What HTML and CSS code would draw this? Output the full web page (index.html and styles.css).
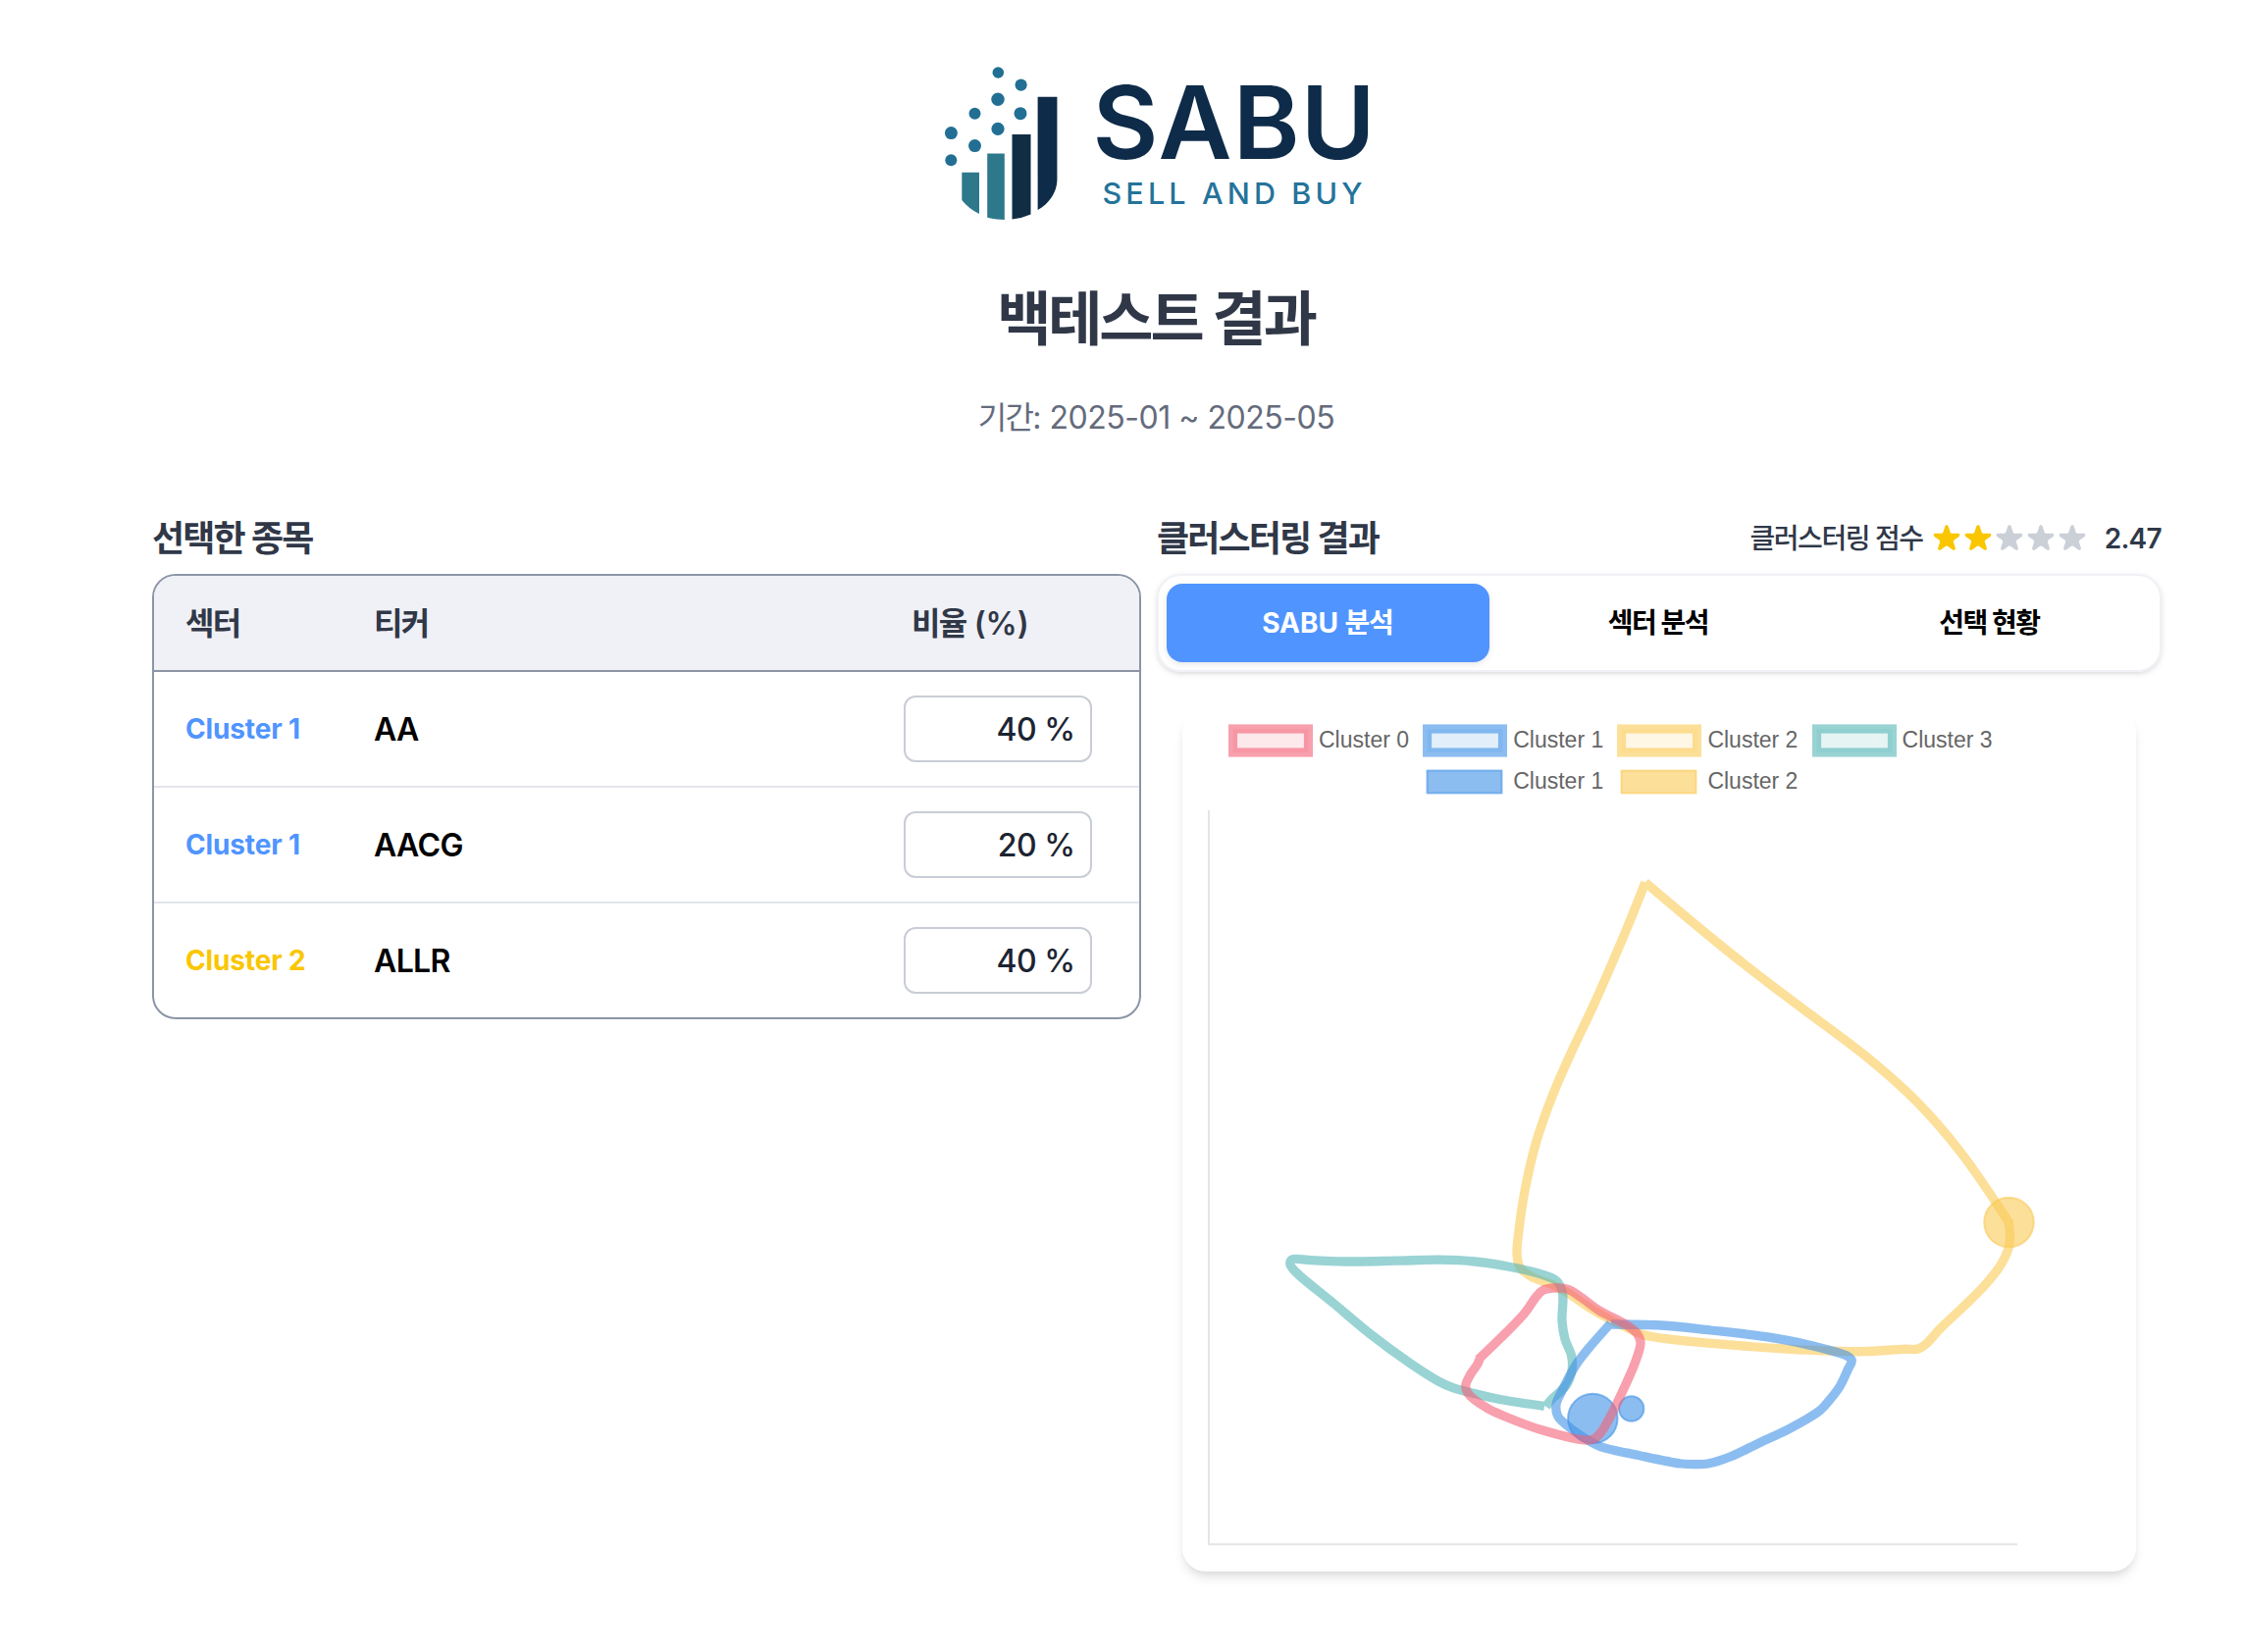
FILE: index.html
```html
<!DOCTYPE html>
<html lang="ko">
<head>
<meta charset="utf-8">
<title>SABU - 백테스트 결과</title>
<link rel="stylesheet" href="styles.css">
</head>
<body>
<main class="page">
  <header class="hero">
    <svg class="logo" viewBox="954 56 450 180" role="img" aria-label="SABU">
      <g fill="#226f93">
        <circle cx="1017.3" cy="74" r="5.8"/>
        <circle cx="1040.6" cy="86.6" r="6.1"/>
        <circle cx="1017" cy="101.3" r="6.7"/>
        <circle cx="993.5" cy="115.7" r="6"/>
        <circle cx="1040" cy="115.7" r="6.5"/>
        <circle cx="1017" cy="131.4" r="6.6"/>
        <circle cx="969.4" cy="135.6" r="6.5"/>
        <circle cx="993.5" cy="148.6" r="6.5"/>
        <circle cx="969.3" cy="163.2" r="6"/>
      </g>
      <path fill="#2d788b" d="M980.3 175.8H998V218Q987.500 213 980.300 204Z"/>
      <path fill="#2d788b" d="M1006.200 156.400H1023.800V223.900Q1015 223.800 1006.200 221.800Z"/>
      <path fill="#112d45" d="M1031.500 137H1050.500V218.500Q1041.500 222.600 1031.500 223.500Z"/>
      <path fill="#0e2b49" d="M1057.600 98.800H1077.400V184C1077 196 1069 208 1057.600 214Z"/>
      <text class="logo-name" x="1113.500" y="161.800" textLength="288" lengthAdjust="spacing">SABU</text>
      <text class="logo-tag" x="1123.500" y="207.700" textLength="265" lengthAdjust="spacing">SELL AND BUY</text>
    </svg>
    <h1 class="title ko">백테스트 결과</h1>
    <p class="period"><span class="ko">기간</span>: 2025-01 ~ 2025-05</p>
  </header>

  <div class="columns">
    <section class="stocks">
      <div class="section-head"><h2 class="ko">선택한 종목</h2></div>
      <div class="table">
        <div class="row head">
          <span class="ko">섹터</span><span class="ko">티커</span><span class="ratio-head"><span class="ko">비율</span> (%)</span>
        </div>
        <div class="row">
          <span class="sector blue">Cluster 1</span><span class="ticker">AA</span><span class="ratio">40 %</span>
        </div>
        <div class="row">
          <span class="sector blue">Cluster 1</span><span class="ticker">AACG</span><span class="ratio">20 %</span>
        </div>
        <div class="row">
          <span class="sector yellow">Cluster 2</span><span class="ticker">ALLR</span><span class="ratio">40 %</span>
        </div>
      </div>
    </section>

    <section class="clusters">
      <div class="section-head">
        <h2 class="ko">클러스터링 결과</h2>
        <div class="score">
          <span class="score-label ko">클러스터링 점수</span>
          <svg class="stars" viewBox="0 0 100 20">
            <defs><path id="star" transform="translate(10 10) scale(1.120) translate(-10 -9.900)" d="M9.049 2.927c.3-.921 1.603-.921 1.902 0l1.070 3.292a1 1 0 00.950.690h3.462c.969 0 1.371 1.240.588 1.810l-2.800 2.034a1 1 0 00-.364 1.118l1.070 3.292c.3.921-.755 1.688-1.540 1.118l-2.800-2.034a1 1 0 00-1.175 0l-2.800 2.034c-.784.570-1.838-.197-1.539-1.118l1.070-3.292a1 1 0 00-.364-1.118L2.980 8.720c-.783-.570-.380-1.810.588-1.810h3.461a1 1 0 00.951-.690l1.070-3.292z"/></defs>
            <use href="#star" class="on"/><use href="#star" class="on" x="20"/><use href="#star" class="off" x="40"/><use href="#star" class="off" x="60"/><use href="#star" class="off" x="80"/>
          </svg>
          <span class="score-value">2.47</span>
        </div>
      </div>
      <nav class="tabs">
        <button class="tab active">SABU <span class="ko">분석</span></button>
        <button class="tab"><span class="ko">섹터 분석</span></button>
        <button class="tab"><span class="ko">선택 현황</span></button>
      </nav>
      <div class="card">
        <div class="legend">
          <span class="key"><svg class="swatch c0" viewBox="0 0 86 34"><rect x="4.500" y="5" width="77" height="24"/></svg>Cluster 0</span>
          <span class="key"><svg class="swatch c1" viewBox="0 0 86 34"><rect x="4.500" y="5" width="77" height="24"/></svg>Cluster 1</span>
          <span class="key"><svg class="swatch c2" viewBox="0 0 86 34"><rect x="4.500" y="5" width="77" height="24"/></svg>Cluster 2</span>
          <span class="key"><svg class="swatch c3" viewBox="0 0 86 34"><rect x="4.500" y="5" width="77" height="24"/></svg>Cluster 3</span>
          <span class="key second"><svg class="swatch p1" viewBox="0 0 86 34"><rect x="4.500" y="5.500" width="76" height="23"/></svg>Cluster 1</span>
          <span class="key"><svg class="swatch p2" viewBox="0 0 86 34"><rect x="4.500" y="5.500" width="76" height="23"/></svg>Cluster 2</span>
        </div>
        <svg class="plot" id="plot" viewBox="1205 822 972 780">
          <path class="axis" d="M1232 826V1575M1231 1574.200H2056"/>
          <circle class="p2" cx="2047.500" cy="1246" r="25.300"/>
          <circle class="p1" cx="1623.300" cy="1446" r="25.300"/>
          <circle class="p1" cx="1662.700" cy="1436" r="12.700"/>
        </svg>
      </div>
    </section>
  </div>
</main>
<script src="chart.js"></script>
</body>
</html>
```
FILE: styles.css
```css
* { box-sizing: border-box; }
body {
  margin: 0;
  background: #fff;
  color: #303848;
  font-family: Inter, "Noto Sans CJK KR", sans-serif;
}
h1, h2, p { margin: 0; }
.ko { letter-spacing: -0.052em; }

.page { padding: 56px 83px 82px 155px; }

.hero { display: flex; flex-direction: column; align-items: center; }
.logo { display: block; width: 450px; height: 180px; }
.logo-name { font-size: 103px; font-weight: 600; fill: #0e2b49; }
.logo-tag { font-size: 30.500px; font-weight: 500; fill: #24739a; }
.title { margin-top: 53px; padding-right: 2px; font-size: 60px; line-height: 72px; font-weight: 700; }
.period { margin-top: 41px; padding-right: 1px; font-size: 32px; line-height: 48px; letter-spacing: -0.480px; color: #646b7c; }

.columns { display: grid; grid-template-columns: 1008px 1024px; gap: 16px; margin-top: 75px; align-items: start; }
.section-head { display: flex; justify-content: space-between; align-items: center; height: 48px; margin-bottom: 12px; }
.section-head h2 { font-size: 36px; line-height: 48px; font-weight: 600; }

.table { border: 2px solid #8c95a7; border-radius: 24px; overflow: hidden; }
.row {
  display: grid;
  grid-template-columns: 192px 1fr 192px;
  align-items: center;
  height: 118px;
  padding: 0 48px 0 32px;
  border-bottom: 2px solid #e3e5ec;
  font-size: 32px;
}
.row:last-child { height: 116px; border-bottom: 0; }
.row.head { height: 98px; padding-bottom: 4px; background: #f0f1f6; border-color: #8c95a7; font-weight: 600; }
.ratio-head { padding-left: 8px; }
.sector { font-size: 28px; font-weight: 700; letter-spacing: -0.150px; }
.blue { color: #5094ff; }
.yellow { color: #f9c600; }
.ticker { color: #000; font-weight: 600; letter-spacing: -0.650px; }
.ratio {
  height: 68px;
  padding-right: 15.500px;
  border: 2px solid #c9cdd5;
  border-radius: 12px;
  line-height: 66px;
  text-align: right;
  font-weight: 500;
  letter-spacing: -0.500px;
  color: #1c2432;
}

.score { display: flex; align-items: center; font-size: 28px; line-height: 40px; }
.score-label { font-weight: 500; margin-right: 8px; }
.stars { width: 160px; height: 32px; margin-right: 17px; }
.on { fill: #f9c600; }
.off { fill: #cbcfd7; }
.score-value { font-weight: 600; letter-spacing: -0.700px; }

.tabs {
  display: grid;
  grid-template-columns: repeat(3, 1fr);
  gap: 8px;
  height: 100px;
  padding: 8px;
  border: 2px solid #f0f1f6;
  border-radius: 24px;
  box-shadow: 0 2px 6px rgba(0, 0, 0, .1), 0 2px 4px -2px rgba(0, 0, 0, .1);
}
.tab {
  border: 0;
  border-radius: 16px;
  background: none;
  padding: 0 2px 0 0;
  font: 700 28px/40px Inter, "Noto Sans CJK KR", sans-serif;
  color: #000;
}
.tab.active { background: #5094ff; color: #fff; box-shadow: 0 2px 6px rgba(0, 0, 0, .1); }

.card {
  margin: 38px 26px 0;
  border-radius: 24px;
  background: #fff;
  box-shadow: 0 8px 12px -2px rgba(0, 0, 0, .1), 0 4px 8px -4px rgba(0, 0, 0, .1);
}
.legend {
  display: grid;
  grid-template-columns: repeat(4, 198.200px);
  grid-auto-rows: 42px;
  height: 99px;
  padding: 10.500px 0 0 47px;
  font-family: "Liberation Sans", Arial, sans-serif;
  font-size: 23px;
  color: #666;
}
.key { display: flex; align-items: center; gap: 6px; }
.key.second { grid-column: 2; }
.swatch { width: 86px; height: 34px; }
.swatch rect { stroke-width: 9.200; }

.c0 { stroke: rgba(243, 97, 118, .6); fill: rgba(243, 97, 118, .14); }
.c1 { stroke: rgba(63, 145, 230, .6); fill: rgba(63, 145, 230, .15); }
.c2 { stroke: rgba(250, 202, 85, .6); fill: rgba(250, 202, 85, .15); }
.c3 { stroke: rgba(85, 182, 183, .6); fill: rgba(85, 182, 183, .15); }
.p1, .swatch.p1 rect { stroke: rgba(63, 145, 230, .6); fill: rgba(63, 145, 230, .6); stroke-width: 1.900; }
.p2, .swatch.p2 rect { stroke: rgba(250, 202, 85, .6); fill: rgba(250, 202, 85, .6); stroke-width: 1.900; }

.plot { display: block; width: 972px; height: 780px; }
.plot .line { fill: none; stroke-width: 9.300; }
.axis { fill: none; stroke: #e5e5e5; stroke-width: 2; }
```
FILE: chart.js
```js
// Cluster outlines, back to front.
const outlines = [
  { cls: 'c2', points: [
    [1676.8,899.5],[1719.9,935.9],[1762.1,970.5],[1803.7,1003],[1845,1034],[1904.9,1079.4],[1954.3,1123.8],[1999.7,1176.5],[2047.3,1246],[2047.3,1246],
    [2048,1268],[2040,1288],[2023,1310],[2000,1333],[1976.7,1355],[1963,1370],[1955,1375],[1940,1375.3],[1900,1377.7],[1853,1376.7],
    [1776.7,1372],[1675,1360.7],[1655,1351.7],[1640,1344.5],[1620,1333],[1598,1318],[1583,1310],[1560,1301],[1549,1291.7],[1546,1278],
    [1547.7,1256.7],[1554,1214],[1565.8,1163.6],[1583,1115],[1602,1071.5],[1624,1025],[1644,979.5],[1661.5,938],[1676.8,899.5]] },
  { cls: 'c3', points: [
    [1574,1433.3],[1530,1426.7],[1506.7,1421.5],[1480,1414.3],[1466.7,1408.3],[1436.7,1389.3],[1396.7,1360],[1360,1329.3],[1320,1296],
    [1314.8,1288.5],[1316.7,1283.9],[1336.7,1284.7],[1380,1286],[1423.3,1285.2],[1466.7,1284.2],[1503.3,1286],[1536.7,1291],[1570,1298.7],
    [1586.7,1306],[1592.5,1318],[1592,1346.7],[1595,1365],[1601.5,1381.7],[1602.3,1395],[1597,1411],[1580,1428],[1575.7,1434]] },
  { cls: 'c1', points: [
    [1641.7,1350],[1693.3,1351],[1743.3,1356],[1800,1362.7],[1843.3,1371],[1883.3,1382.7],[1887.3,1386.7],[1883.3,1396],[1875,1413.3],
    [1865,1426.7],[1855,1437.7],[1823.3,1456.7],[1793.3,1470.7],[1763.3,1485],[1741.7,1491.7],[1726.7,1492.7],[1713.3,1492],[1670,1483.5],
    [1631.7,1474.8],[1621.7,1470],[1596.7,1452.7],[1587.7,1443.5],[1586,1431.7],[1591.7,1418.3],[1606.7,1390.5],[1619,1374.5],[1641.500,1349]] },
  { cls: 'c0', points: [
    [1506.5,1386],[1553.3,1339.3],[1565,1322.7],[1571.7,1315.7],[1583.3,1313],[1598.3,1314.3],[1611.7,1322.7],[1630,1336],[1656.7,1350],
    [1668.3,1359.3],[1672,1368.3],[1666.7,1388.3],[1656.7,1411.7],[1641.7,1443],[1631.7,1460],[1625,1466.7],[1616.7,1468.2],[1573.3,1458.3],
    [1543.3,1447.7],[1516.7,1436],[1496.7,1421],[1493.7,1412.7],[1498.3,1401.7],[1505.7,1390.7],[1508,1385.5]] }
];

// Smooth curve through the points; a repeated point makes a corner.
function curve(p) {
  let d = `M${p[0]}`;
  for (let i = 0; i < p.length - 1; i++) {
    const a = p[i - 1] || p[i], b = p[i], c = p[i + 1], e = p[i + 2] || c;
    if (b[0] === c[0] && b[1] === c[1]) continue;
    const len = (u, v) => Math.sqrt(Math.hypot(v[0] - u[0], v[1] - u[1]));
    const d1 = len(a, b), d2 = len(b, c), d3 = len(c, e);
    const c1 = [0, 1].map(k => d1 ? (d1*d1*c[k] - d2*d2*a[k] + (2*d1*d1 + 3*d1*d2 + d2*d2)*b[k]) / (3*d1*(d1 + d2)) : b[k]);
    const c2 = [0, 1].map(k => d3 ? (d3*d3*b[k] - d2*d2*e[k] + (2*d3*d3 + 3*d3*d2 + d2*d2)*c[k]) / (3*d3*(d3 + d2)) : c[k]);
    d += `C${c1} ${c2} ${c}`;
  }
  return d;
}

for (const { cls, points } of outlines) {
  const path = document.createElementNS('http://www.w3.org/2000/svg', 'path');
  path.setAttribute('class', `line ${cls}`);
  path.setAttribute('d', curve(points));
  document.getElementById('plot').append(path);
}
```
